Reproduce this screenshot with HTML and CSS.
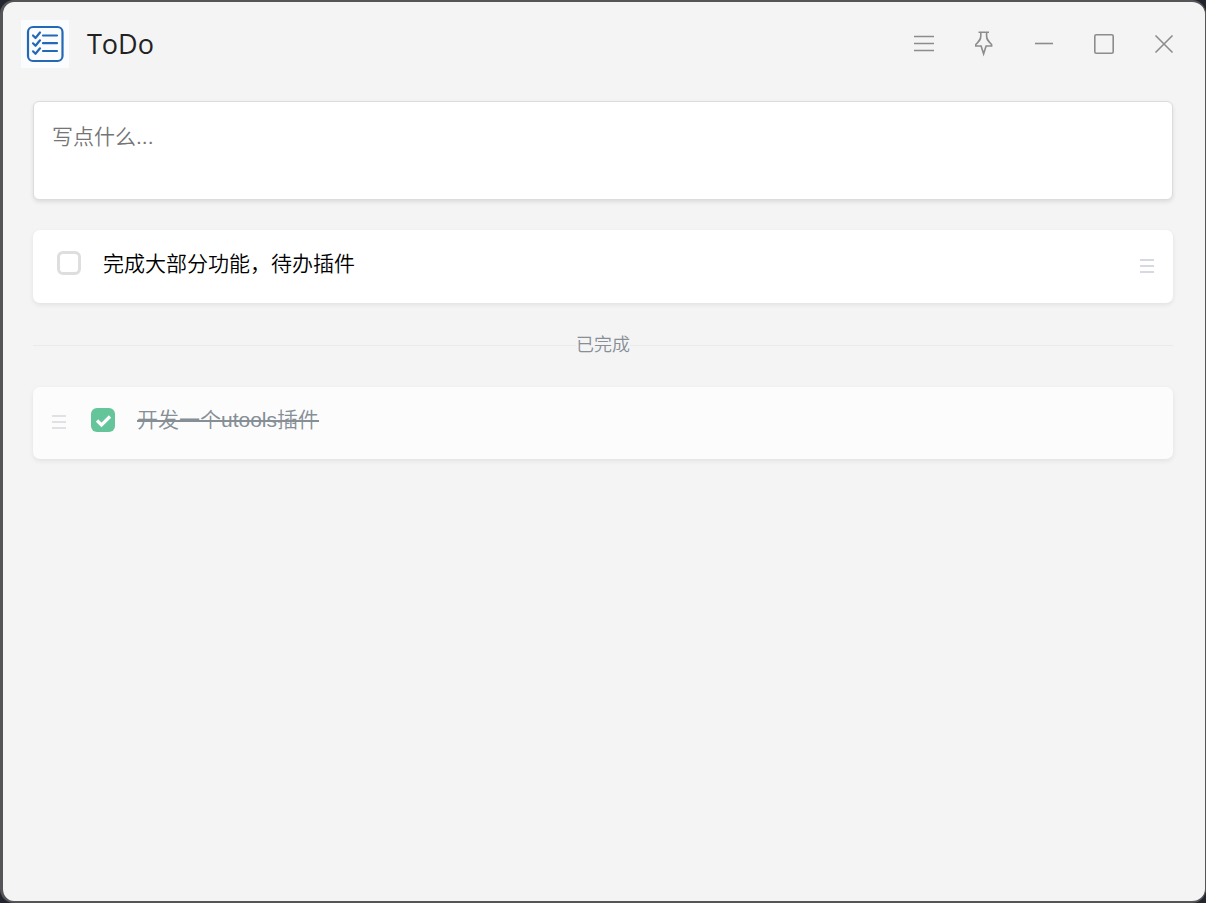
FILE: index.html
```html
<!DOCTYPE html>
<html lang="zh-CN">
<head>
<meta charset="utf-8">
<title>ToDo</title>
<link rel="stylesheet" href="styles.css">
</head>
<body>
<div class="window">
  <header class="titlebar">
    <svg class="logo" viewBox="0 0 48 48" fill="none" stroke="#2468b8" stroke-linecap="round" stroke-linejoin="round" aria-hidden="true">
      <rect width="48" height="48" fill="#fbfcfd" stroke="none"/>
      <rect x="7" y="7" width="34.5" height="34" rx="5" stroke-width="2.200"/>
      <g stroke-width="2.200">
        <path d="M12 15.500l2.500 2.500L19 12.500M12 23.300l2.500 2.500L19 20.300M12 31.300l2.500 2.500L19 28.300"/>
        <path d="M22 15.500h14M22 23.200h14M22 31h14"/>
      </g>
    </svg>
    <h1 class="title">ToDo</h1>
    <nav class="controls">
      <button class="control" type="button" aria-label="菜单"><svg viewBox="0 0 28 28"><path d="M4 6.500h20M4 13.500h20M4 20.500h20"/></svg></button>
      <button class="control" type="button" aria-label="置顶"><svg viewBox="0 0 28 28"><path d="M8.500 2.200h10.500M10.800 2.200v3.800c0 3.500-1.500 5-5 8.500v1.500h5.300l2.500 7.800 2.500-7.800h5.500v-1.500c-3.500-3.500-5-5-5-8.500V2.200"/></svg></button>
      <button class="control" type="button" aria-label="最小化"><svg viewBox="0 0 28 28"><path d="M5 13.500h18"/></svg></button>
      <button class="control" type="button" aria-label="最大化"><svg viewBox="0 0 28 28"><rect x="4.800" y="4.800" width="18.400" height="18.400" rx="1.500"/></svg></button>
      <button class="control" type="button" aria-label="关闭"><svg viewBox="0 0 28 28"><path d="M5.500 5.500l17 17M22.500 5.500l-17 17"/></svg></button>
    </nav>
  </header>
  <main class="content">
    <textarea class="composer" aria-label="新待办" placeholder="写点什么..."></textarea>
    <ul class="list">
      <li class="item">
        <input class="check" type="checkbox" id="todo-1">
        <label class="text" for="todo-1">完成大部分功能，待办插件</label>
        <svg class="handle" viewBox="0 0 14 14" aria-hidden="true"><path d="M0 1h14M0 7h14M0 13h14"/></svg>
      </li>
    </ul>
    <h2 class="divider">已完成</h2>
    <ul class="list">
      <li class="item done">
        <svg class="handle" viewBox="0 0 14 14" aria-hidden="true"><path d="M0 1h14M0 7h14M0 13h14"/></svg>
        <input class="check" type="checkbox" id="todo-2" checked>
        <label class="text" for="todo-2">开发一个utools插件</label>
      </li>
    </ul>
  </main>
</div>
</body>
</html>
```
FILE: styles.css
```css
* {
  box-sizing: border-box;
}

html {
  background: #22252d;
}

body {
  margin: 0;
  font-family: "Liberation Sans", "Noto Sans CJK SC", sans-serif;
  font-weight: 350;
}

.window {
  min-height: 100vh;
  border: solid #555558;
  border-width: 2px 1px 2px 3px;
  border-radius: 14px;
  background: #f4f4f4;
}

.titlebar {
  display: flex;
  align-items: center;
  height: 84px;
  padding: 0 11px 0 18px;
}

.logo {
  width: 48px;
  height: 48px;
}

.title {
  flex: 1;
  margin: 0 0 0 18px;
  font: 400 27px/40px "Open Sans", sans-serif;
  color: #222;
}

.controls {
  display: flex;
}

.control {
  display: flex;
  align-items: center;
  justify-content: center;
  width: 60px;
  height: 60px;
  padding: 0;
  border: 0;
  background: none;
}

.control svg {
  width: 28px;
  height: 28px;
  fill: none;
  stroke: #8c8c8c;
  stroke-width: 1.6;
}

.content {
  padding: 15px 32px 32px 30px;
}

.composer {
  display: block;
  width: 100%;
  height: 99px;
  padding: 18px;
  border: 1px solid #dcdcdc;
  border-radius: 6px;
  background: #fff;
  box-shadow: 0 2px 4px rgba(0, 0, 0, 0.1);
  font: inherit;
  font-size: 21px;
  line-height: 34px;
  resize: none;
}

.composer::placeholder {
  color: #757575;
}

.list {
  margin: 0;
  padding: 0;
  list-style: none;
}

.item {
  display: flex;
  align-items: flex-start;
  margin-top: 30px;
  min-height: 73px;
  padding: 18px 19px 18px 24px;
  border-radius: 7px;
  background: #fff;
  box-shadow: 0 2px 5px rgba(0, 0, 0, 0.08);
}

.check {
  appearance: none;
  flex: none;
  width: 24px;
  height: 24px;
  margin: 3px 22px 0 0;
  border: 3px solid #dedede;
  border-radius: 6px;
}

.check:checked {
  border: 0;
  background: #64c59a url("data:image/svg+xml,%3Csvg xmlns='http://www.w3.org/2000/svg' viewBox='0 0 24 24'%3E%3Cpath d='M6 12.500l4.500 4.500L19 8.500' fill='none' stroke='white' stroke-width='3.200'/%3E%3C/svg%3E");
}

.text {
  flex: 1;
  font-size: 21px;
  line-height: 32px;
  color: #000;
}

.handle {
  width: 14px;
  height: 14px;
  margin-top: 11px;
  fill: none;
  stroke: #d6d9df;
  stroke-width: 2;
}

.divider {
  display: flex;
  align-items: center;
  margin: 28px 0 0;
  font-size: 18px;
  font-weight: 350;
  line-height: 29px;
  color: #868e96;
}

.divider::before,
.divider::after {
  content: "";
  flex: 1;
  height: 1px;
  background: #e9eaeb;
}

.done {
  margin-top: 27px;
  min-height: 72px;
  padding-top: 17px;
  padding-left: 19px;
  background: #fcfcfc;
}

.done .check {
  margin-top: 4px;
  margin-left: 25px;
}

.done .handle {
  stroke: #dfe1e4;
}

.done .text {
  color: #868e96;
  text-decoration: line-through;
  text-decoration-thickness: 2px;
}
```
